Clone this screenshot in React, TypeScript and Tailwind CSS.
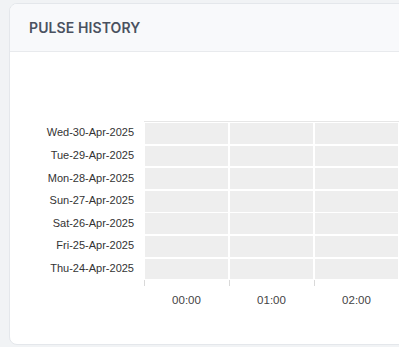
import React from "react";

const days = [
  "Wed-30-Apr-2025",
  "Tue-29-Apr-2025",
  "Mon-28-Apr-2025",
  "Sun-27-Apr-2025",
  "Sat-26-Apr-2025",
  "Fri-25-Apr-2025",
  "Thu-24-Apr-2025",
];

const hours = ["00:00", "01:00", "02:00", ""];

export default function App() {
  return (
    <div className="w-[399px] h-[347px] overflow-hidden bg-[#f1f3f5] pl-[9px] pt-[3px] font-['Liberation_Sans',Arial,sans-serif]">
      <div className="w-[430px] h-[342px] bg-white border border-[#e4e7eb] rounded-lg overflow-hidden flex flex-col">
        <div className="h-[48px] shrink-0 bg-[#f8f9fb] border-b border-[#e8eaed] flex items-center px-[19px]">
          <h2 className="font-['Inter',sans-serif] text-[14px] font-semibold text-[#4a5160] tracking-[0.1px]">
            PULSE HISTORY
          </h2>
        </div>

        <div className="flex pt-[69px]">
          <div className="w-[124px] shrink-0 pt-[1px] grid grid-rows-[repeat(7,20.8px)] gap-y-[1.8px] text-right text-[11px] text-[#333]">
            {days.map((d) => (
              <div key={d} className="flex items-center justify-end leading-none pt-[1px]">
                {d}
              </div>
            ))}
          </div>

          <div className="ml-[10px] w-[345px] shrink-0">
            <div className="border-t border-[#e6e6e6] pl-[1px] pt-[1px] grid grid-cols-[repeat(4,83px)] grid-rows-[repeat(7,20.8px)] gap-x-[2px] gap-y-[1.8px]">
              {days.map((d) =>
                hours.map((h, i) => <div key={d + i} className="bg-[#eeeeee]" />)
              )}
            </div>
            <div className="grid grid-cols-[repeat(4,85px)] mt-[1px]">
              {hours.map((h, i) => (
                <div key={i}>
                  <div className="h-[6px] border-l border-[#d9d9d9]" />
                  <div className="text-center text-[11.5px] text-[#444] pt-[9px] leading-none">{h}</div>
                </div>
              ))}
            </div>
          </div>
        </div>
      </div>
    </div>
  );
}
